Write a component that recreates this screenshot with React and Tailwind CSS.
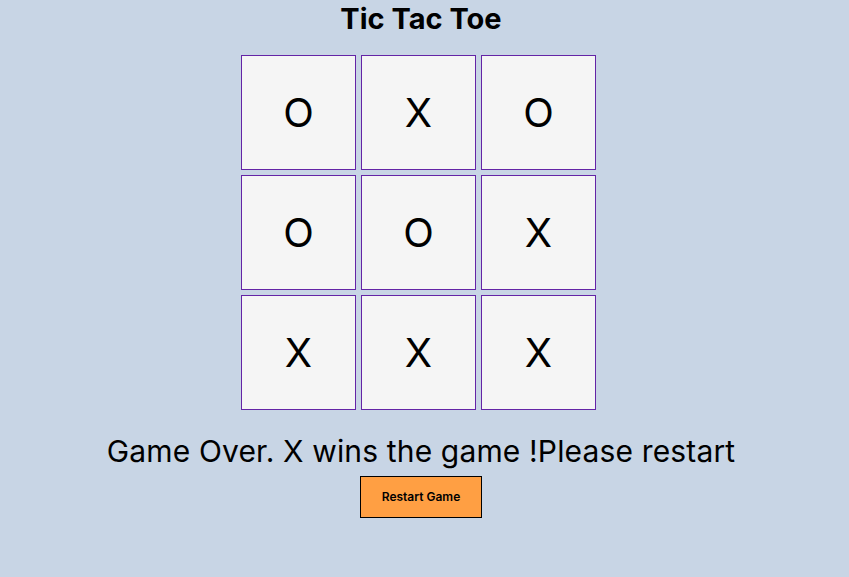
import React, { useState } from 'react';

// Tic Tac Toe — board, status line and restart button
const start = ['O', 'X', 'O', 'O', 'O', 'X', 'X', 'X', 'X'];

export default function App() {
  const [cells, setCells] = useState(start);

  return (
    <div className="min-h-screen w-full bg-[#c8d5e5] flex flex-col items-center pr-[7px] text-black" style={{ fontFamily: 'Inter, "Open Sans", sans-serif' }}>
      <h1 className="text-[29px] leading-[38px] font-bold">Tic Tac Toe</h1>

      {/* Board — purple frame drawn as 1px padding around each cell */}
      <div className="grid grid-cols-[115px_115px_115px] gap-[5px] mt-[17px] mr-[5px]">
        {cells.map((c, i) => (
          <div key={i} className="w-[115px] h-[115px] bg-[#6424a6] p-px">
            <div
              onClick={() => setCells(cells.map((v, j) => (j === i && !v ? 'X' : v)))}
              className="w-full h-full bg-[#f5f5f5] flex items-center justify-center text-[40px] font-normal cursor-pointer"
            >
              {c}
            </div>
          </div>
        ))}
      </div>

      <p className="text-[30px] leading-[40px] mt-[21px] tracking-[0.15px]">Game Over. X wins the game !Please restart</p>

      <button
        onClick={() => setCells(Array(9).fill(''))}
        className="mt-[5px] w-[122px] h-[42px] bg-[#ff9f43] border border-black text-[12px] font-semibold"
      >
        Restart Game
      </button>
    </div>
  );
}
